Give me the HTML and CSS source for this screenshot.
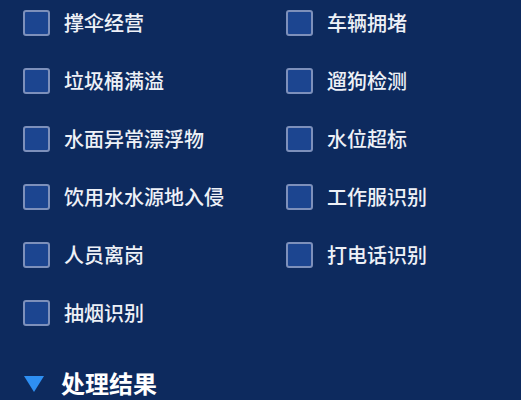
FILE: index.html
```html
<!DOCTYPE html>
<html lang="zh-CN">
  <head>
    <meta charset="UTF-8" />
    <meta name="viewport" content="width=device-width, initial-scale=1.0" />
    <title>事件类型</title>
    <link rel="stylesheet" href="styles.css">
  </head>
  <body>
    <div class="panel">
      <div class="options">
        <label class="option"><span class="box"></span>撑伞经营</label>
        <label class="option"><span class="box"></span>车辆拥堵</label>
        <label class="option"><span class="box"></span>垃圾桶满溢</label>
        <label class="option"><span class="box"></span>遛狗检测</label>
        <label class="option"><span class="box"></span>水面异常漂浮物</label>
        <label class="option"><span class="box"></span>水位超标</label>
        <label class="option"><span class="box"></span>饮用水水源地入侵</label>
        <label class="option"><span class="box"></span>工作服识别</label>
        <label class="option"><span class="box"></span>人员离岗</label>
        <label class="option"><span class="box"></span>打电话识别</label>
        <label class="option"><span class="box"></span>抽烟识别</label>
      </div>
      <div class="section-title">
        <span class="arrow"></span>
        处理结果
      </div>
    </div>
  </body>
</html>
```

FILE: styles.css
```css
body {
  font-family: "Noto Sans CJK SC", "Noto Sans", sans-serif;
  background-color: #0d2a5e;
  margin: 0;
  padding: 0;
  color: #eef1f7;
}

.panel {
  padding: 10px 0 0 23px;
  height: 400px;
  box-sizing: border-box;
  overflow: hidden;
}

.options {
  display: grid;
  grid-template-columns: 263px 1fr;
  row-gap: 32px;
}

.option {
  display: flex;
  align-items: center;
  height: 26px;
  font-size: 20px;
  font-weight: 500;
  line-height: 26px;
}

.box {
  width: 27px;
  height: 26px;
  box-sizing: border-box;
  border: 2px solid #7d90bb;
  border-radius: 3px;
  background-color: #1c4590;
  margin-right: 14px;
  flex-shrink: 0;
}

.section-title {
  display: flex;
  align-items: center;
  margin-top: 43px;
  font-size: 24px;
  font-weight: bold;
  line-height: 28px;
  color: #ffffff;
}

.arrow {
  width: 0;
  height: 0;
  border-left: 10px solid transparent;
  border-right: 10px solid transparent;
  border-top: 16px solid #2e8ff2;
  margin: 2px 17px 0 1px;
}
```
